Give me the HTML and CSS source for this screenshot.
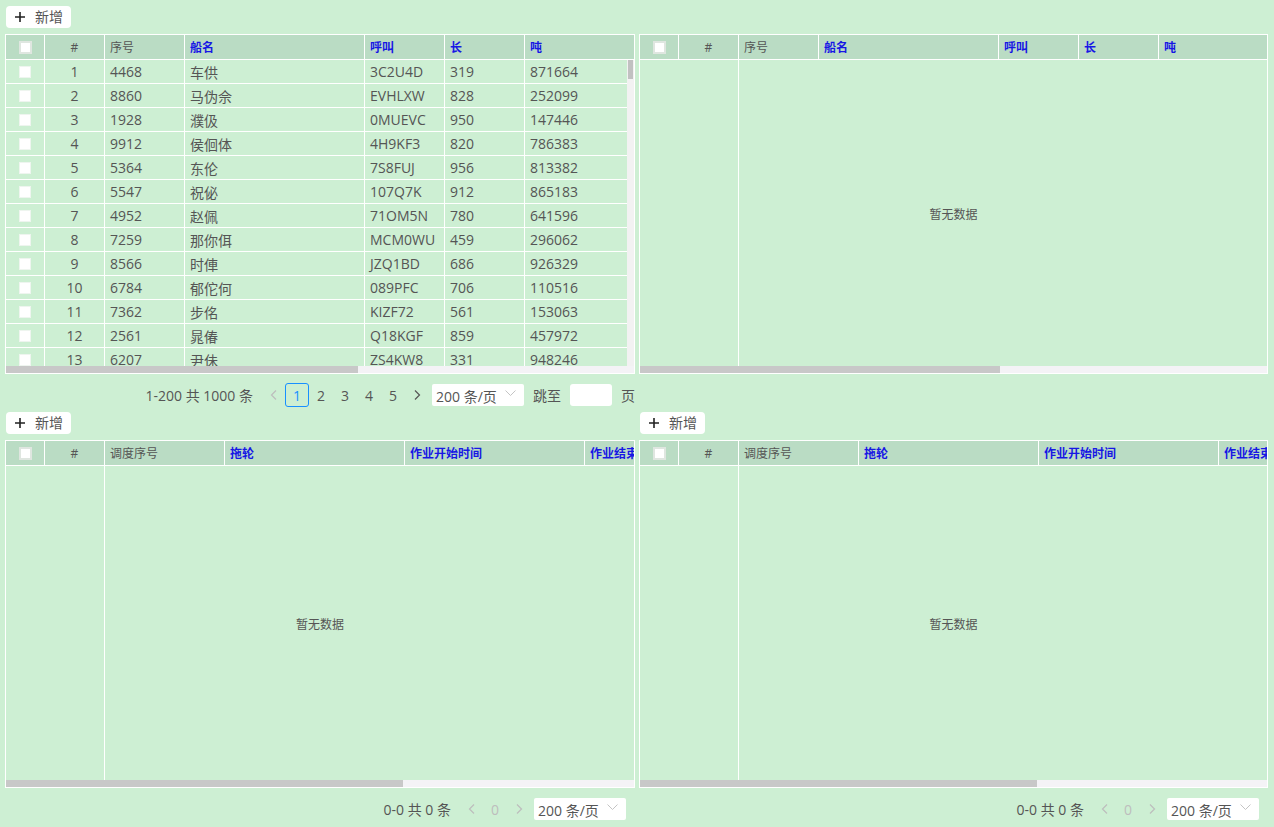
FILE: index.html
```html
<!DOCTYPE html>
<html lang="zh-CN">
<head>
<meta charset="utf-8">
<title>船舶调度</title>
<link rel="stylesheet" href="styles.css">
</head>
<body>
<div class="page">

  <!-- top left: ships -->
  <section class="panel">
    <div class="toolbar">
      <button class="btn-add"><svg class="plus" width="10" height="10" viewBox="0 0 10 10"><path d="M5 0V10M0 5H10" stroke="#222" stroke-width="1.6"/></svg><span>新增</span></button>
    </div>
    <div class="tbl ship">
      <div class="thead">
        <div class="th center"><span class="cb cb-head"></span></div>
        <div class="th center">#</div>
        <div class="th">序号</div>
        <div class="th blue">船名</div>
        <div class="th blue">呼叫</div>
        <div class="th blue">长</div>
        <div class="th blue">吨</div>
      </div>
      <div class="tbody">
        <div class="rows">
          <div class="tr"><div class="td center"><span class="cb"></span></div><div class="td center">1</div><div class="td">4468</div><div class="td">车供</div><div class="td">3C2U4D</div><div class="td">319</div><div class="td">871664</div></div>
          <div class="tr"><div class="td center"><span class="cb"></span></div><div class="td center">2</div><div class="td">8860</div><div class="td">马伪佘</div><div class="td">EVHLXW</div><div class="td">828</div><div class="td">252099</div></div>
          <div class="tr"><div class="td center"><span class="cb"></span></div><div class="td center">3</div><div class="td">1928</div><div class="td">濮伋</div><div class="td">0MUEVC</div><div class="td">950</div><div class="td">147446</div></div>
          <div class="tr"><div class="td center"><span class="cb"></span></div><div class="td center">4</div><div class="td">9912</div><div class="td">侯佪体</div><div class="td">4H9KF3</div><div class="td">820</div><div class="td">786383</div></div>
          <div class="tr"><div class="td center"><span class="cb"></span></div><div class="td center">5</div><div class="td">5364</div><div class="td">东伦</div><div class="td">7S8FUJ</div><div class="td">956</div><div class="td">813382</div></div>
          <div class="tr"><div class="td center"><span class="cb"></span></div><div class="td center">6</div><div class="td">5547</div><div class="td">祝佖</div><div class="td">107Q7K</div><div class="td">912</div><div class="td">865183</div></div>
          <div class="tr"><div class="td center"><span class="cb"></span></div><div class="td center">7</div><div class="td">4952</div><div class="td">赵佩</div><div class="td">71OM5N</div><div class="td">780</div><div class="td">641596</div></div>
          <div class="tr"><div class="td center"><span class="cb"></span></div><div class="td center">8</div><div class="td">7259</div><div class="td">那你佴</div><div class="td">MCM0WU</div><div class="td">459</div><div class="td">296062</div></div>
          <div class="tr"><div class="td center"><span class="cb"></span></div><div class="td center">9</div><div class="td">8566</div><div class="td">时俥</div><div class="td">JZQ1BD</div><div class="td">686</div><div class="td">926329</div></div>
          <div class="tr"><div class="td center"><span class="cb"></span></div><div class="td center">10</div><div class="td">6784</div><div class="td">郁佗何</div><div class="td">089PFC</div><div class="td">706</div><div class="td">110516</div></div>
          <div class="tr"><div class="td center"><span class="cb"></span></div><div class="td center">11</div><div class="td">7362</div><div class="td">步佲</div><div class="td">KIZF72</div><div class="td">561</div><div class="td">153063</div></div>
          <div class="tr"><div class="td center"><span class="cb"></span></div><div class="td center">12</div><div class="td">2561</div><div class="td">晁偆</div><div class="td">Q18KGF</div><div class="td">859</div><div class="td">457972</div></div>
          <div class="tr"><div class="td center"><span class="cb"></span></div><div class="td center">13</div><div class="td">6207</div><div class="td">尹佅</div><div class="td">ZS4KW8</div><div class="td">331</div><div class="td">948246</div></div>
        </div>
        <div class="vscroll"><div class="vthumb"></div></div>
      </div>
      <div class="hscroll"><div class="hthumb" style="width:352px"></div></div>
    </div>
    <div class="pager">
      <span class="total">1-200 共 1000 条</span>
      <span class="pg dis"><svg width="7" height="10" viewBox="0 0 7 10"><path d="M6 0.5L1.5 5L6 9.5" fill="none" stroke="currentColor" stroke-width="1.2"/></svg></span>
      <span class="pg active">1</span>
      <span class="pg">2</span>
      <span class="pg">3</span>
      <span class="pg">4</span>
      <span class="pg">5</span>
      <span class="pg"><svg width="7" height="10" viewBox="0 0 7 10"><path d="M1 0.5L5.5 5L1 9.5" fill="none" stroke="currentColor" stroke-width="1.2"/></svg></span>
      <span class="size"><span class="size-text">200 条/页</span><svg class="arrow" width="11" height="6" viewBox="0 0 11 6"><path d="M0.5 0.5L5.5 5.5L10.5 0.5" fill="none" stroke="#c4c4c4" stroke-width="1"/></svg></span>
      <span class="jump">跳至</span>
      <span class="jump-input"></span>
      <span>页</span>
    </div>
  </section>

  <!-- top right: ships (empty) -->
  <section class="panel">
    <div class="toolbar"></div>
    <div class="tbl ship">
      <div class="thead">
        <div class="th center"><span class="cb cb-head"></span></div>
        <div class="th center">#</div>
        <div class="th">序号</div>
        <div class="th blue">船名</div>
        <div class="th blue">呼叫</div>
        <div class="th blue">长</div>
        <div class="th blue">吨</div>
      </div>
      <div class="tbody empty">
        <div class="fixed"></div>
        <div class="empty-msg">暂无数据</div>
      </div>
      <div class="hscroll"><div class="hthumb" style="width:360px"></div></div>
    </div>
  </section>

  <!-- bottom left: dispatch -->
  <section class="panel">
    <div class="toolbar">
      <button class="btn-add"><svg class="plus" width="10" height="10" viewBox="0 0 10 10"><path d="M5 0V10M0 5H10" stroke="#222" stroke-width="1.6"/></svg><span>新增</span></button>
    </div>
    <div class="tbl disp">
      <div class="thead">
        <div class="th center"><span class="cb cb-head"></span></div>
        <div class="th center">#</div>
        <div class="th">调度序号</div>
        <div class="th blue">拖轮</div>
        <div class="th blue">作业开始时间</div>
        <div class="th blue">作业结束时间</div>
      </div>
      <div class="tbody empty tall">
        <div class="fixed"></div>
        <div class="empty-msg">暂无数据</div>
      </div>
      <div class="hscroll"><div class="hthumb" style="width:397px"></div></div>
    </div>
    <div class="pager">
      <span class="total">0-0 共 0 条</span>
      <span class="pg dis"><svg width="7" height="10" viewBox="0 0 7 10"><path d="M6 0.5L1.5 5L6 9.5" fill="none" stroke="currentColor" stroke-width="1.2"/></svg></span>
      <span class="pg dis">0</span>
      <span class="pg dis"><svg width="7" height="10" viewBox="0 0 7 10"><path d="M1 0.5L5.5 5L1 9.5" fill="none" stroke="currentColor" stroke-width="1.2"/></svg></span>
      <span class="size last"><span class="size-text">200 条/页</span><svg class="arrow" width="11" height="6" viewBox="0 0 11 6"><path d="M0.5 0.5L5.5 5.5L10.5 0.5" fill="none" stroke="#c4c4c4" stroke-width="1"/></svg></span>
    </div>
  </section>

  <!-- bottom right: dispatch -->
  <section class="panel">
    <div class="toolbar">
      <button class="btn-add"><svg class="plus" width="10" height="10" viewBox="0 0 10 10"><path d="M5 0V10M0 5H10" stroke="#222" stroke-width="1.6"/></svg><span>新增</span></button>
    </div>
    <div class="tbl disp">
      <div class="thead">
        <div class="th center"><span class="cb cb-head"></span></div>
        <div class="th center">#</div>
        <div class="th">调度序号</div>
        <div class="th blue">拖轮</div>
        <div class="th blue">作业开始时间</div>
        <div class="th blue">作业结束时间</div>
      </div>
      <div class="tbody empty tall">
        <div class="fixed"></div>
        <div class="empty-msg">暂无数据</div>
      </div>
      <div class="hscroll"><div class="hthumb" style="width:397px"></div></div>
    </div>
    <div class="pager">
      <span class="total">0-0 共 0 条</span>
      <span class="pg dis"><svg width="7" height="10" viewBox="0 0 7 10"><path d="M6 0.5L1.5 5L6 9.5" fill="none" stroke="currentColor" stroke-width="1.2"/></svg></span>
      <span class="pg dis">0</span>
      <span class="pg dis"><svg width="7" height="10" viewBox="0 0 7 10"><path d="M1 0.5L5.5 5L1 9.5" fill="none" stroke="currentColor" stroke-width="1.2"/></svg></span>
      <span class="size last"><span class="size-text">200 条/页</span><svg class="arrow" width="11" height="6" viewBox="0 0 11 6"><path d="M0.5 0.5L5.5 5.5L10.5 0.5" fill="none" stroke="#c4c4c4" stroke-width="1"/></svg></span>
    </div>
  </section>

</div>
</body>
</html>
```
FILE: styles.css
```css
* {
  box-sizing: border-box;
}

html,
body {
  margin: 0;
  padding: 0;
}

body {
  background: #cdefd3;
  color: #555;
  font-family: "Open Sans", "Noto Sans CJK SC", sans-serif;
  font-size: 14px;
}

.page {
  display: grid;
  grid-template-columns: 630px 629px;
  column-gap: 4px;
  row-gap: 5px;
  padding: 6px 0 0 5px;
}

.panel {
  display: flex;
  flex-direction: column;
  min-width: 0;
}

.toolbar {
  height: 22px;
  margin-bottom: 6px;
  display: flex;
}

.btn-add {
  height: 22px;
  width: 65px;
  margin-left: 1px;
  display: flex;
  align-items: center;
  gap: 10px;
  padding: 0 0 0 9px;
  background: #fff;
  border: none;
  border-radius: 4px;
  font-family: inherit;
  font-size: 14px;
  color: #555;
  line-height: 22px;
}

.plus {
  flex: none;
}

/* tables */
.tbl {
  border: 1px solid #fff;
  overflow: hidden;
  display: flex;
  flex-direction: column;
}

.thead,
.tr {
  display: grid;
  border-bottom: 1px solid #fff;
}

.thead {
  height: 25px;
  background: #badcc4;
}

.tr {
  height: 24px;
}

.ship .thead,
.ship .tr {
  grid-template-columns: 39px 60px 80px 180px 80px 80px 400px;
}

.disp .thead,
.disp .tr {
  grid-template-columns: 39px 60px 120px 180px 180px 180px 300px;
}

.th,
.td {
  display: flex;
  align-items: center;
  padding: 0 5px;
  border-right: 1px solid #fff;
  white-space: nowrap;
  overflow: hidden;
}

.th {
  font-size: 12px;
}

.td {
  font-size: 14px;
}

.th.blue {
  color: #1717e4;
  font-weight: bold;
}

.center {
  justify-content: center;
}

.cb {
  display: block;
  width: 12px;
  height: 12px;
  background: #fff;
  border: 1px solid #eef5ef;
}

.cb-head {
  width: 13px;
  height: 13px;
  border: 2px solid #dfe6e0;
}

.tbody {
  display: flex;
  height: 306px;
}

.rows {
  flex: 1;
  min-width: 0;
  overflow: hidden;
}

.vscroll {
  width: 7px;
  background: #f2f2f2;
  flex: none;
}

.vthumb {
  height: 19px;
  margin: 0 1px;
  background: #c1c1c1;
}

.tbody.empty {
  display: grid;
}

.tbody.tall {
  height: 314px;
}

.fixed {
  grid-area: 1 / 1;
  width: 99px;
  border-right: 1px solid #fff;
}

.empty-msg {
  grid-area: 1 / 1;
  place-self: center;
  font-size: 12px;
  font-family: "Noto Sans CJK SC", sans-serif;
}

.hscroll {
  height: 7px;
  background: #f4f3f6;
  flex: none;
}

.hthumb {
  height: 100%;
  background: #c8c8c8;
}

/* pagination */
.pager {
  display: flex;
  justify-content: flex-end;
  align-items: center;
  height: 24px;
  margin-top: 9px;
}

.total {
  margin-right: 8px;
}

.pg {
  width: 24px;
  height: 24px;
  display: flex;
  align-items: center;
  justify-content: center;
  border-radius: 3px;
  color: #555;
}

.pg.active {
  border: 1px solid #1890ff;
  color: #1890ff;
}

.pg.dis {
  color: #bdbdbd;
}

.size {
  width: 92px;
  height: 22px;
  margin-left: 3px;
  padding: 0 8px 0 4px;
  display: flex;
  align-items: center;
  background: #fff;
  border-radius: 2px;
}

.size-text {
  line-height: 22px;
  padding-top: 3px;
}

.arrow {
  margin-left: auto;
  margin-top: -4px;
}

.size.last {
  margin-right: 9px;
}

.jump {
  margin-left: 9px;
}

.jump-input {
  width: 42px;
  height: 22px;
  margin: 0 9px;
  background: #fff;
  border-radius: 3px;
}
```
